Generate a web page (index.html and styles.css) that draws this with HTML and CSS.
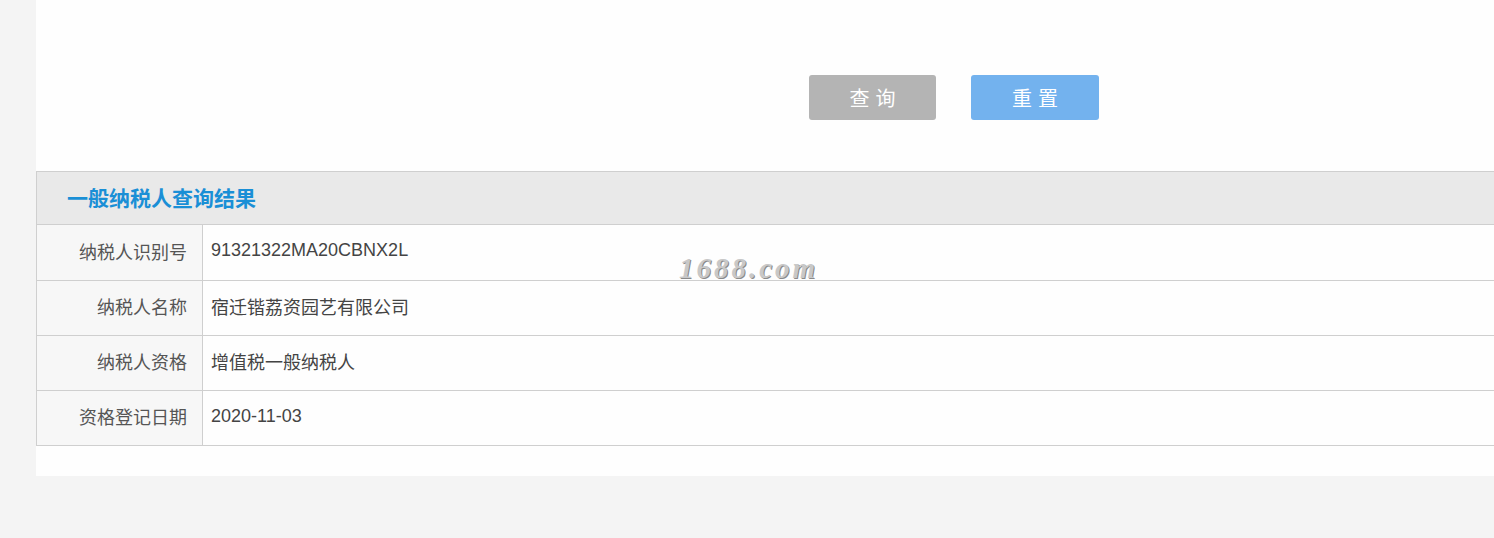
FILE: index.html
```html
<!DOCTYPE html>
<html lang="zh-CN">
<head>
  <meta charset="UTF-8">
  <title>一般纳税人查询</title>
  <link rel="stylesheet" href="styles.css">
</head>
<body>

<div class="panel">
  <div class="actions">
    <button class="btn btn-query">查询</button>
    <button class="btn btn-reset">重置</button>
  </div>

  <div class="result">
    <div class="result-title">一般纳税人查询结果</div>
    <table class="result-table">
      <tr>
        <th>纳税人识别号</th>
        <td>91321322MA20CBNX2L</td>
      </tr>
      <tr>
        <th>纳税人名称</th>
        <td>宿迁锴荔资园艺有限公司</td>
      </tr>
      <tr>
        <th>纳税人资格</th>
        <td>增值税一般纳税人</td>
      </tr>
      <tr>
        <th>资格登记日期</th>
        <td>2020-11-03</td>
      </tr>
    </table>
    <div class="watermark">1688.com</div>
  </div>
</div>

</body>
</html>
```

FILE: styles.css
```css
html, body {
  margin: 0;
  padding: 0;
}

body {
  font-family: "Liberation Sans", "Noto Sans CJK SC", sans-serif;
  background-color: #f4f4f4;
  height: 538px;
  overflow: hidden;
}

.panel {
  margin-left: 36px;
  width: 1480px;
  height: 476px;
  background-color: #fefefe;
}

.actions {
  display: flex;
  align-items: flex-start;
  gap: 35px;
  padding: 75px 0 0 773px;
  height: 171px;
  box-sizing: border-box;
}

.btn {
  width: 127px;
  height: 45px;
  border: none;
  border-radius: 3px;
  color: #fff;
  font-family: "Noto Sans CJK SC", sans-serif;
  font-size: 20px;
  letter-spacing: 6px;
  padding: 0 0 0 6px;
  cursor: pointer;
}

.btn-query {
  background-color: #b4b4b4;
}

.btn-reset {
  width: 128px;
  background-color: #73b2ee;
}

.result {
  position: relative;
}

.result-title {
  height: 52px;
  line-height: 50px;
  padding-left: 30px;
  background-color: #e9e9e9;
  border-top: 1px solid #cfcfcf;
  border-left: 1px solid #cfcfcf;
  border-bottom: 1px solid #cfcfcf;
  color: #1a8fd6;
  font-family: "Noto Sans CJK SC", sans-serif;
  font-size: 21px;
  font-weight: bold;
}

.result-table {
  width: 100%;
  border-collapse: collapse;
  font-size: 18px;
}

.result-table th,
.result-table td {
  height: 55px;
  border-bottom: 1px solid #cfcfcf;
  padding: 0 8px 3px;
  font-weight: normal;
  box-sizing: border-box;
}

.result-table th {
  width: 166px;
  text-align: right;
  color: #555;
  background-color: #f7f7f7;
  border-left: 1px solid #cfcfcf;
  border-right: 1px solid #cfcfcf;
  padding-right: 15px;
}

.result-table td {
  text-align: left;
  color: #444;
}

.watermark {
  position: absolute;
  left: 643px;
  top: 81px;
  font-family: "Liberation Serif", serif;
  font-style: italic;
  font-weight: bold;
  font-size: 29px;
  letter-spacing: 3px;
  color: #c8c8c8;
  text-shadow: 1px 1px 0 #8a8a8a;
}
```
